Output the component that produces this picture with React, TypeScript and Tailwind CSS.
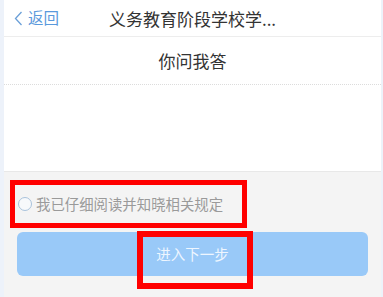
import React from "react";

export default function App() {
  const font = { fontFamily: '"Noto Sans CJK SC", "Noto Sans", sans-serif' };
  return (
    <div
      className="w-[383px] h-[297px] flex bg-[#edf2fa] overflow-hidden"
      style={font}
    >
      <div className="ml-[4px] w-[377px] flex flex-col">
        {/* header */}
        <div className="h-[37px] bg-white border-b border-[#ededed] grid grid-cols-[1fr_auto_1fr] items-center">
          <div className="flex items-center pl-[10px] gap-[5px] text-[#5a99dc]">
            <svg width="9" height="15" viewBox="0 0 9 15" fill="none">
              <polyline
                points="7.5,1 1.5,7.5 7.5,14"
                stroke="#6a9fd8"
                strokeWidth="1.3"
                fill="none"
              />
            </svg>
            <span className="text-[15.5px] leading-none">返回</span>
          </div>
          <div className="text-[17px] leading-none text-[#333]">义务教育阶段学校学...</div>
          <div />
        </div>
        {/* 你问我答 */}
        <div className="h-[48px] bg-white border-b border-dotted border-[#dcdcdc] flex items-center justify-center">
          <span className="text-[17px] leading-none text-[#333]">你问我答</span>
        </div>
        <div className="h-[87px] bg-white border-b border-[#e8e8e8]" />
        {/* bottom area */}
        <div className="flex-1 bg-[#f4f4f4] pt-[8px] pl-[6px]">
          <div className="w-[237px] h-[48px] border-[5px] border-[#ff0000] flex items-center pl-[3px] gap-[4px]">
            <span className="w-[14px] h-[14px] rounded-full border border-[#a9c3dc] bg-[#f7f9fb]" />
            <span className="text-[14.4px] leading-none text-[#9a9a9a]">我已仔细阅读并知晓相关规定</span>
          </div>
          <div className="relative mt-[4px] ml-[7px] w-[351px] h-[44px] rounded-[6px] bg-[#99c9f8] flex items-center justify-center">
            <span className="text-[14.5px] leading-none text-[#eef6ff]">进入下一步</span>
            <div className="absolute left-[120px] top-[-1px] w-[116px] h-[58px] border-[6px] border-[#ff0000]" />
          </div>
        </div>
      </div>
      <div className="w-[2px]" />
    </div>
  );
}
